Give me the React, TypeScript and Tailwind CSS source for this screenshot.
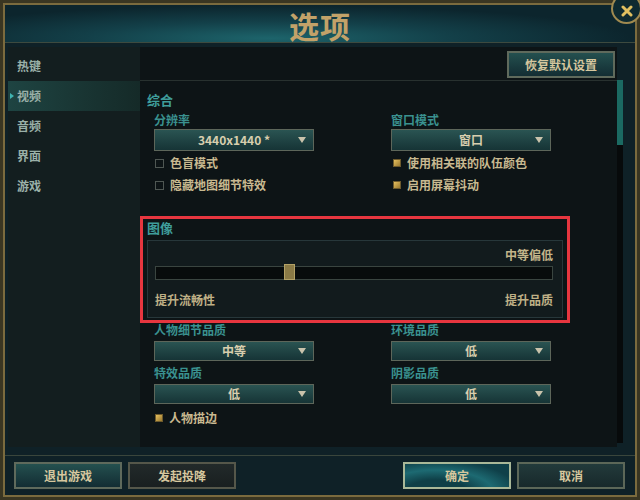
import React from 'react';

const navItems = ['热键', '视频', '音频', '界面', '游戏'];

const Arrow: React.FC = () => (
  <svg width="8" height="6" viewBox="0 0 8 6" className="absolute right-[7px] top-1/2 -translate-y-1/2">
    <path d="M0 0h8L4 6z" fill="#c9c3ac" />
  </svg>
);

const Select: React.FC<{ value: string; tall?: boolean }> = ({ value, tall }) => (
  <div
    className={`relative flex w-[160px] items-center justify-center border border-[#5d665a] bg-linear-to-b from-[#2a5452] to-[#163436] text-[12px] font-bold text-[#d8ceae] ${
      tall ? 'h-[22px]' : 'h-[20px]'
    }`}
  >
    {value}
    <Arrow />
  </div>
);

const Check: React.FC<{ on?: boolean; label: string }> = ({ on, label }) => (
  <div className="flex h-[16px] items-center gap-[6px] text-[12px] font-bold text-[#c8b990]">
    {on ? (
      <span className="ml-[1px] h-[8px] w-[8px] border border-[#6d5a2c] bg-linear-to-br from-[#e6c05e] to-[#9a7a30]" />
    ) : (
      <span className="h-[9px] w-[9px] border border-[#4f5753]" />
    )}
    {label}
  </div>
);

const Label: React.FC<{ children: React.ReactNode }> = ({ children }) => (
  <div className="h-[14px] text-[12px] leading-[14px] font-bold text-[#3a918f]">{children}</div>
);

const Btn: React.FC<{ label: string; tone: 'teal' | 'dark' | 'bright' | 'plain' }> = ({ label, tone }) => {
  const tones = {
    teal: 'border-[#5f6a5c] bg-linear-to-b from-[#24504f] to-[#132d33]',
    dark: 'border-[#55574a] bg-linear-to-b from-[#222a2a] to-[#191f20]',
    bright: 'border-[#a9b898] bg-[radial-gradient(ellipse_at_30%_120%,#0f3f47_30%,#1d6a72_55%,#0f4049_80%)]',
    plain: 'border-[#5c6758] bg-linear-to-b from-[#223a3b] to-[#18292b]',
  };
  return (
    <div
      className={`flex h-[27px] w-[108px] items-center justify-center border-2 text-[12px] font-bold text-[#d6c79e] ${tones[tone]}`}
    >
      {label}
    </div>
  );
};

export default function App() {
  return (
    <div className="relative h-[500px] w-[640px] overflow-hidden bg-[#3a3622] pl-[3px] pt-[3px] font-['Noto_Sans_CJK_SC','Liberation_Sans',sans-serif]">
      <div className="flex h-[494px] w-[634px] flex-col border-2 border-[#7b6b3e] bg-[#0f2127]">
        {/* title bar */}
        <div className="flex h-[38px] items-center justify-center border-b border-[#3d4a3f] bg-[radial-gradient(ellipse_at_42%_90%,#1d646b_0%,#134049_35%,#0c252d_70%)]">
          <span className="mt-[2px] text-[30px] leading-none font-bold tracking-[1px] text-[#c2a269]">选项</span>
        </div>

        <div className="flex min-h-0 flex-1 pt-[4px]">
          {/* side nav */}
          <div className="ml-[3px] flex w-[132px] flex-col bg-[#131e1f] pt-[4px]">
            {navItems.map((n) => (
              <div
                key={n}
                className={`relative flex h-[30px] items-center pl-[9px] text-[12px] font-bold text-[#9ab0a8] ${
                  n === '视频' ? 'bg-linear-to-r from-[#1e4442] to-[#152a28]' : ''
                }`}
              >
                {n === '视频' && (
                  <svg width="4" height="6" viewBox="0 0 4 6" className="absolute left-[2px] top-[12px]">
                    <path d="M0 0l4 3-4 3z" fill="#3fb3b0" />
                  </svg>
                )}
                {n}
              </div>
            ))}
          </div>

          {/* settings panel */}
          <div className="flex w-[477px] flex-col bg-[#0d1416]">
            <div className="flex h-[34px] justify-end border-b border-[#28312f] pr-[2px] pt-[4px]">
              <Btn label="恢复默认设置" tone="teal" />
            </div>

            <div className="flex-1">
              <div className="mt-[11px] h-[16px] pl-[7px] text-[13px] leading-[16px] font-bold text-[#3f9d9b]">综合</div>

              <div className="mt-[5px] flex pl-[14px]">
                <div className="w-[237px]"><Label>分辨率</Label></div>
                <Label>窗口模式</Label>
              </div>
              <div className="mt-[2px] flex pl-[14px]">
                <div className="w-[237px]"><Select value="3440x1440 *" tall /></div>
                <Select value="窗口" tall />
              </div>
              <div className="mt-[4px] flex pl-[15px]">
                <div className="w-[237px]"><Check label="色盲模式" /></div>
                <Check on label="使用相关联的队伍颜色" />
              </div>
              <div className="mt-[6px] flex pl-[15px]">
                <div className="w-[237px]"><Check label="隐藏地图细节特效" /></div>
                <Check on label="启用屏幕抖动" />
              </div>

              {/* graphics quality */}
              <div className="mt-[23px] h-[107px] w-[430px] border-[3px] border-[#e6363f]">
                <div className="mt-[1px] h-[16px] pl-[4px] text-[13px] leading-[16px] font-bold text-[#3f9d9b]">图像</div>
                <div className="ml-[4px] mt-[4px] h-[78px] w-[416px] border border-[#27373a] bg-[#121b1d]">
                  <div className="mt-[7px] h-[14px] pr-[9px] text-right text-[12px] leading-[14px] font-bold text-[#c3b48a]">中等偏低</div>
                  <div className="relative ml-[7px] mr-[9px] mt-[4px] h-[14px] border border-[#3a4540] bg-[#080c0c]">
                    <div className="absolute left-[128px] top-[-3px] h-[16px] w-[11px] border border-[#b3a266] bg-[#8a7a46]" />
                  </div>
                  <div className="ml-[7px] mr-[9px] mt-[13px] flex h-[14px] justify-between text-[12px] leading-[14px] font-bold text-[#bfb086]">
                    <span>提升流畅性</span>
                    <span>提升品质</span>
                  </div>
                </div>
              </div>

              <div className="flex pl-[14px]">
                <div className="w-[237px]"><Label>人物细节品质</Label></div>
                <Label>环境品质</Label>
              </div>
              <div className="mt-[4px] flex pl-[14px]">
                <div className="w-[237px]"><Select value="中等" /></div>
                <Select value="低" />
              </div>
              <div className="mt-[5px] flex pl-[14px]">
                <div className="w-[237px]"><Label>特效品质</Label></div>
                <Label>阴影品质</Label>
              </div>
              <div className="mt-[4px] flex pl-[14px]">
                <div className="w-[237px]"><Select value="低" /></div>
                <Select value="低" />
              </div>
              <div className="mt-[6px] pl-[14px]">
                <Check on label="人物描边" />
              </div>
            </div>
          </div>

          {/* scrollbar */}
          <div className="mb-[4px] mt-[33px] flex w-[6px] flex-col">
            <div className="h-[65px] bg-[#1b6a62]" />
            <div className="flex-1 bg-[#070a0b]" />
          </div>
        </div>

        {/* footer */}
        <div className="h-[48px] pt-[8px]">
          <div className="flex justify-between border-t border-[#3a463c] pl-[9px] pr-[10px] pt-[6px]">
            <div className="flex gap-[6px]">
              <Btn label="退出游戏" tone="teal" />
              <Btn label="发起投降" tone="dark" />
            </div>
            <div className="flex gap-[6px]">
              <Btn label="确定" tone="bright" />
              <Btn label="取消" tone="plain" />
            </div>
          </div>
        </div>
      </div>

      {/* close button */}
      <div className="absolute left-[611px] top-[-7px] flex h-[31px] w-[31px] items-center justify-center rounded-full border-2 border-[#a08a50] bg-[#0e2a30]">
        <svg width="12" height="12" viewBox="0 0 12 12" className="mt-[4px]">
          <path d="M2 2l8 8M10 2l-8 8" stroke="#e0c060" strokeWidth="3" strokeLinecap="round" />
        </svg>
      </div>
    </div>
  );
}
